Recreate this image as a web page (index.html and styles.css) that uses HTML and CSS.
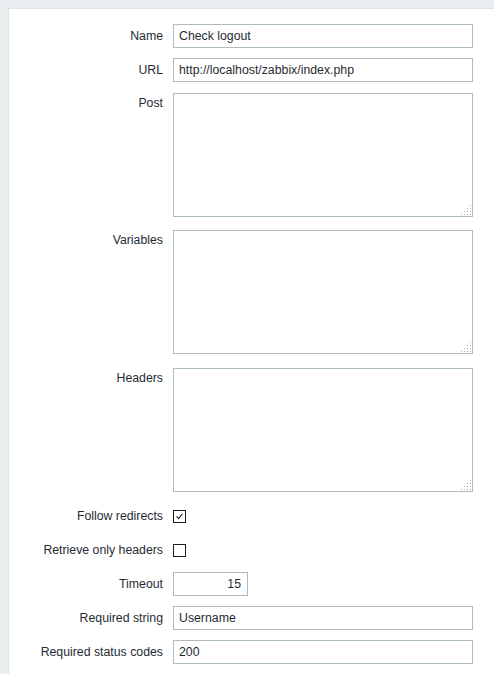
FILE: index.html
```html
<!DOCTYPE html>
<html lang="en">
<head>
    <meta charset="UTF-8">
    <meta name="viewport" content="width=device-width, initial-scale=1.0">
    <title>Web scenario step</title>
    <link rel="stylesheet" href="styles.css">
</head>
<body>
    <div class="panel">
        <form class="form-grid" id="stepForm">
            <label class="field-label" for="name">Name</label>
            <div class="field"><input type="text" id="name" class="text-input" value="Check logout"></div>

            <label class="field-label" for="url">URL</label>
            <div class="field"><input type="text" id="url" class="text-input" value="http://localhost/zabbix/index.php"></div>

            <label class="field-label top" for="post">Post</label>
            <div class="field area-field">
                <textarea id="post" class="text-area"></textarea>
                <svg class="grip" width="12" height="12" viewBox="0 0 12 12"><g fill="#a9b0b4"><rect x="10" y="1" width="1" height="1"/><rect x="7" y="4" width="1" height="1"/><rect x="10" y="4" width="1" height="1"/><rect x="4" y="7" width="1" height="1"/><rect x="7" y="7" width="1" height="1"/><rect x="10" y="7" width="1" height="1"/><rect x="1" y="10" width="1" height="1"/><rect x="4" y="10" width="1" height="1"/><rect x="7" y="10" width="1" height="1"/><rect x="10" y="10" width="1" height="1"/></g></svg>
            </div>

            <label class="field-label top" for="variables">Variables</label>
            <div class="field area-field">
                <textarea id="variables" class="text-area"></textarea>
                <svg class="grip" width="12" height="12" viewBox="0 0 12 12"><g fill="#a9b0b4"><rect x="10" y="1" width="1" height="1"/><rect x="7" y="4" width="1" height="1"/><rect x="10" y="4" width="1" height="1"/><rect x="4" y="7" width="1" height="1"/><rect x="7" y="7" width="1" height="1"/><rect x="10" y="7" width="1" height="1"/><rect x="1" y="10" width="1" height="1"/><rect x="4" y="10" width="1" height="1"/><rect x="7" y="10" width="1" height="1"/><rect x="10" y="10" width="1" height="1"/></g></svg>
            </div>

            <label class="field-label top last" for="headers">Headers</label>
            <div class="field area-field last">
                <textarea id="headers" class="text-area"></textarea>
                <svg class="grip" width="12" height="12" viewBox="0 0 12 12"><g fill="#a9b0b4"><rect x="10" y="1" width="1" height="1"/><rect x="7" y="4" width="1" height="1"/><rect x="10" y="4" width="1" height="1"/><rect x="4" y="7" width="1" height="1"/><rect x="7" y="7" width="1" height="1"/><rect x="10" y="7" width="1" height="1"/><rect x="1" y="10" width="1" height="1"/><rect x="4" y="10" width="1" height="1"/><rect x="7" y="10" width="1" height="1"/><rect x="10" y="10" width="1" height="1"/></g></svg>
            </div>

            <label class="field-label" for="follow">Follow redirects</label>
            <div class="field">
                <span class="check">
                    <input type="checkbox" id="follow" checked>
                    <svg class="tick" width="13" height="13" viewBox="0 0 13 13"><polyline points="3.6,6.4 5.6,8.6 9.4,3.8" fill="none" stroke="#1f2c33" stroke-width="1.1"/></svg>
                </span>
            </div>

            <label class="field-label" for="retrieve">Retrieve only headers</label>
            <div class="field">
                <span class="check"><input type="checkbox" id="retrieve"></span>
            </div>

            <label class="field-label" for="timeout">Timeout</label>
            <div class="field"><input type="text" id="timeout" class="text-input numeric" value="15"></div>

            <label class="field-label" for="required">Required string</label>
            <div class="field"><input type="text" id="required" class="text-input" value="Username"></div>

            <label class="field-label" for="codes">Required status codes</label>
            <div class="field"><input type="text" id="codes" class="text-input" value="200"></div>
        </form>
    </div>
</body>
</html>
```

FILE: styles.css
```css
body {
    font-family: Arial, "Liberation Sans", sans-serif;
    font-size: 12.3px;
    color: #1f2c33;
    margin: 0;
    padding: 8px 0 0 8px;
    background-color: #ebeef0;
}
.panel {
    background: #ffffff;
    border: 1px solid #dfe4e7;
    border-right: none;
    padding: 15px 0 40px 0;
}
.form-grid {
    display: grid;
    grid-template-columns: 154px 300px;
    column-gap: 10px;
    row-gap: 10px;
}
.field-label {
    text-align: right;
    line-height: 24px;
    white-space: nowrap;
}
.field-label.top {
    line-height: 20px;
    padding-top: 1px;
}
.field-label.top.last {
    padding-top: 2px;
}
.field {
    display: flex;
    align-items: center;
    min-height: 24px;
}
.text-input, .text-area {
    box-sizing: border-box;
    width: 300px;
    border: 1px solid #acbbc2;
    background: #ffffff;
    color: #1f2c33;
    font-family: inherit;
    font-size: inherit;
    margin: 0;
    outline: none;
}
.text-input {
    height: 24px;
    padding: 0 5px;
}
.text-input.numeric {
    width: 75px;
    text-align: right;
    padding-right: 6px;
}
.area-field {
    position: relative;
    margin: 1px 0 2px 0;
}
.area-field.last {
    margin-top: 2px;
}
.text-area {
    display: block;
    height: 124px;
    padding: 4px 5px;
    resize: none;
}
.grip {
    position: absolute;
    right: 1px;
    bottom: 1px;
}
.check {
    position: relative;
    width: 13px;
    height: 13px;
    margin-top: 1px;
}
.check input {
    appearance: none;
    -webkit-appearance: none;
    box-sizing: border-box;
    display: block;
    width: 13px;
    height: 13px;
    margin: 0;
    border: 1px solid #1c1c1c;
    border-radius: 0;
    background: #ffffff;
}
.tick {
    position: absolute;
    left: 0;
    top: 0;
    pointer-events: none;
}
```
